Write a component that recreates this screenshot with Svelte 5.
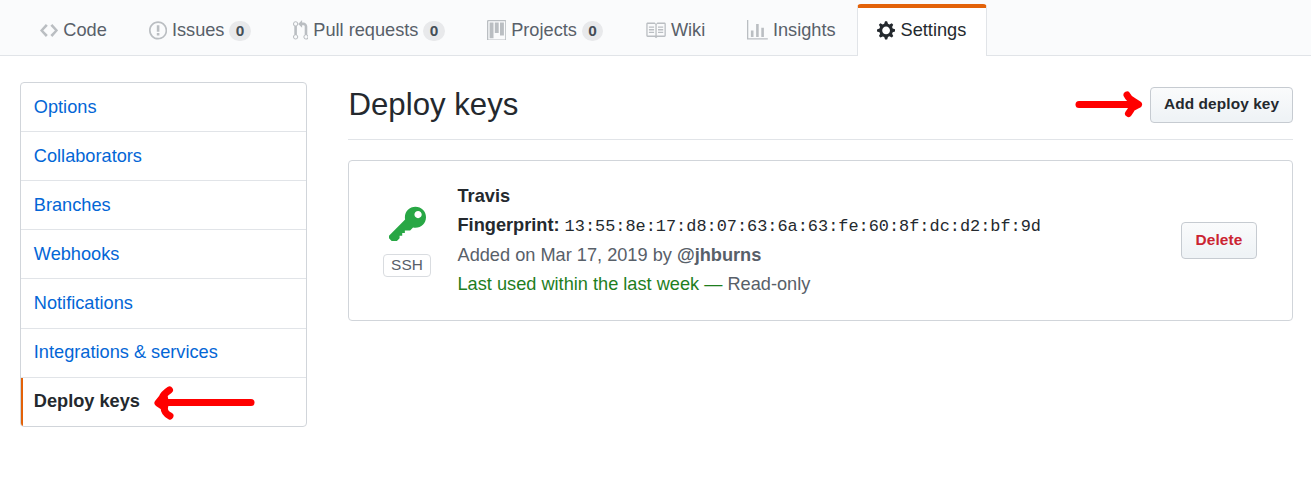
<script>
  const tabs = [
    { label: 'Code', w: 14, d: 'M9.5 3L8 4.5 11.5 8 8 11.5 9.5 13 14 8 9.5 3zm-5 0L0 8l4.5 5L6 11.5 2.5 8 6 4.5 4.5 3z' },
    { label: 'Issues', w: 14, count: 0, d: 'M7 2.3c3.14 0 5.7 2.56 5.7 5.7s-2.56 5.7-5.7 5.7A5.71 5.71 0 0 1 1.3 8c0-3.14 2.56-5.7 5.7-5.7zM7 1C3.14 1 0 4.14 0 8s3.14 7 7 7 7-3.14 7-7-3.14-7-7-7zm1 3H6v5h2V4zm0 6H6v2h2v-2z' },
    { label: 'Pull requests', w: 12, count: 0, d: 'M11 11.28V5c-.03-.78-.34-1.47-.94-2.06C9.46 2.35 8.78 2.03 8 2H7V0L4 3l3 3V4h1c.27.02.48.11.69.31.21.2.3.42.31.69v6.28A1.993 1.993 0 0 0 10 15a1.993 1.993 0 0 0 1-3.72zm-1 2.92c-.66 0-1.2-.55-1.2-1.2 0-.65.55-1.2 1.2-1.2.65 0 1.2.55 1.2 1.2 0 .65-.55 1.2-1.2 1.2zM4 3c0-1.11-.89-2-2-2a1.993 1.993 0 0 0-1 3.72v6.56A1.993 1.993 0 0 0 2 15a1.993 1.993 0 0 0 1-3.72V4.72c.59-.34 1-.98 1-1.72zm-.8 10c0 .66-.55 1.2-1.2 1.2-.65 0-1.2-.55-1.2-1.2 0-.65.55-1.2 1.2-1.2.65 0 1.2.55 1.2 1.2zM2 4.2C1.34 4.2.8 3.65.8 3c0-.65.55-1.2 1.2-1.2.65 0 1.2.55 1.2 1.2 0 .65-.55 1.2-1.2 1.2z' },
    { label: 'Projects', w: 15, count: 0, d: 'M10 12h3V2h-3v10zm-4-2h3V2H6v8zm-4 4h3V2H2v12zm-1 1h13V1H1v14zM14 0H1a1 1 0 0 0-1 1v14a1 1 0 0 0 1 1h13a1 1 0 0 0 1-1V1a1 1 0 0 0-1-1z' },
    { label: 'Wiki', w: 16, d: 'M3 5h4v1H3V5zm0 3h4V7H3v1zm0 2h4V9H3v1zm11-5h-4v1h4V5zm0 2h-4v1h4V7zm0 2h-4v1h4V9zm2-6v9c0 .55-.45 1-1 1H9.5l-1 1-1-1H2c-.55 0-1-.45-1-1V3c0-.55.45-1 1-1h5.5l1 1 1-1H15c.55 0 1 .45 1 1zm-8 .5L7.5 3H2v9h6V3.5zm7-.5H9.5l-.5.5V12h6V3z' },
    { label: 'Insights', w: 16, d: 'M16 14v1H0V0h1v14h15zM5 13H3V8h2v5zm4 0H7V3h2v10zm4 0h-2V6h2v7z' },
    { label: 'Settings', w: 14, active: true, d: 'M14 8.77v-1.6l-1.94-.64-.45-1.09.88-1.84-1.13-1.13-1.81.91-1.09-.45-.69-1.92h-1.6l-.63 1.94-1.11.45-1.84-.88-1.13 1.13.91 1.81-.45 1.09L0 7.23v1.59l1.94.64.45 1.09-.88 1.84 1.13 1.13 1.81-.91 1.09.45.69 1.92h1.59l.63-1.94 1.11-.45 1.84.88 1.13-1.13-.92-1.81.47-1.09L14 8.75v.02zM7 11c-1.66 0-3-1.34-3-3s1.34-3 3-3 3 1.34 3 3-1.34 3-3 3z' }
  ];
  const menu = ['Options', 'Collaborators', 'Branches', 'Webhooks', 'Notifications', 'Integrations & services', 'Deploy keys'];
  const current = 'Deploy keys';
</script>

<header>
  <nav>
    {#each tabs as tab}
      <a class="tab" class:active={tab.active}>
        <svg class="icon" viewBox="0 0 {tab.w} 16" width={tab.w * 1.3} height="20.8"><path fill-rule="evenodd" d={tab.d} /></svg>
        <span>{tab.label}</span>
        {#if tab.count !== undefined}<span class="counter">{tab.count}</span>{/if}
      </a>
    {/each}
  </nav>
</header>

<div class="page">
  <aside>
    {#each menu as item}
      <a class="item" class:selected={item === current}>
        {item}
        {#if item === current}
          <svg class="arrow-left" width="104" height="36" viewBox="0 0 104 36"><path d="M7 17.500H99" /><path d="M17.500 5Q11.500 9 10 13L6 18L12 22Q12 28 18 31" /><path class="barb" d="M6 18L14 8L16 18L14 27Z" /></svg>
        {/if}
      </a>
    {/each}
  </aside>

  <main>
    <div class="subhead">
      <h2>Deploy keys</h2>
      <button class="add">
        Add deploy key
        <svg class="arrow-right" width="70" height="28" viewBox="0 0 70 28"><path d="M4 14.500H62" /><path d="M52 5Q54 9 58 11L63.500 14.500L57 18Q56 20 53.500 23.500" /><path class="barb" d="M64 14.500L56 9L53 14L55 21Z" /></svg>
      </button>
    </div>
    <section class="key">
      <div class="kind">
        <svg width="37" height="42.300" viewBox="0 0 14 16"><path fill-rule="evenodd" d="M12.830 2.170C12.080 1.420 11.140 1.030 10 1c-1.130.03-2.080.42-2.830 1.170S6.040 3.860 6.010 5c0 .3.03.59.09.89L0 12v1l1 1h2l1-1v-1h1v-1h1v-1h2l1.090-1.110c.3.08.59.11.91.11 1.140-.03 2.080-.42 2.830-1.170S13.970 6.140 14 5c-.03-1.140-.42-2.080-1.170-2.830zM11 5.380c-.77 0-1.380-.61-1.380-1.380 0-.77.61-1.380 1.380-1.380.77 0 1.380.61 1.380 1.380 0 .77-.61 1.380-1.380 1.380z" /></svg>
        <span class="ssh">SSH</span>
      </div>
      <div class="details">
        <strong>Travis</strong>
        <div><strong>Fingerprint:</strong> <code>13:55:8e:17:d8:07:63:6a:63:fe:60:8f:dc:d2:bf:9d</code></div>
        <div class="muted">Added on Mar 17, 2019 by <b>@jhburns</b></div>
        <div class="muted"><span class="recent">Last used within the last week —</span> Read-only</div>
      </div>
      <button class="delete">Delete</button>
    </section>
  </main>
</div>

<style>
  :global(body) {
    margin: 0;
    background: #fff;
    color: #24292e;
    font: 18.2px/27.3px "Liberation Sans", Arial, sans-serif;
  }
  header {
    box-sizing: border-box;
    height: 56px;
    padding: 4px 0 0 19.5px;
    background: #fafbfc;
    border-bottom: 1px solid #e1e4e8;
  }
  nav { display: flex; gap: .75px; }
  .tab {
    box-sizing: border-box;
    display: flex;
    align-items: center;
    height: 52px;
    padding: 0 19.5px 2px;
    border: 1px solid transparent;
    border-top: 4px solid transparent;
    border-bottom: 0;
    border-radius: 4px 4px 0 0;
    color: #586069;
    white-space: nowrap;
  }
  .tab.active {
    padding-left: 19px;
    background: #fff;
    color: #24292e;
    border-color: #e36209 #e1e4e8 transparent;
  }
  .icon { margin: -2.2px 5.15px 0 0; fill: #babec2; flex: none; }
  .active .icon { fill: #24292e; margin-right: 5.5px; }
  .counter {
    margin: 0 0 0 5px;
    padding: 0 6.4px;
    border-radius: 20px;
    background: rgba(27, 31, 35, .08);
    color: #444d56;
    font-size: 15.4px;
    font-weight: 700;
    line-height: 20px;
  }
  .page {
    display: flex;
    align-items: flex-start;
    gap: 41px;
    padding: 26px 18px 0 20px;
  }
  aside {
    box-sizing: border-box;
    width: 287px;
    flex: none;
    border: 1px solid #d1d5da;
    border-radius: 4px;
    overflow: hidden;
  }
  .item {
    position: relative;
    display: block;
    box-sizing: border-box;
    height: 49.1px;
    padding: 10.9px 13px 10px 12.8px;
    border-bottom: 1px solid #e1e4e8;
    color: #0366d6;
  }
  .item:nth-child(5) { height: 49.3px; }
  .item:nth-child(6) { padding-top: 10.3px; }
  .item:last-child { border-bottom: 0; height: 48.2px; padding-top: 10.6px; }
  .selected { color: #24292e; font-weight: 700; box-shadow: inset 2px 0 #e36209; }
  .arrow-left, .arrow-right {
    position: absolute;
    fill: none;
    stroke: #f00;
    stroke-width: 7px;
    stroke-linecap: round;
    stroke-linejoin: round;
  }
  .barb { fill: #f00; stroke-width: 2px; }
  .arrow-left { left: 131px; top: 7px; }
  .arrow-right { right: 147px; top: 2px; }
  main { flex: 1; min-width: 0; }
  .subhead {
    display: flex;
    align-items: flex-start;
    justify-content: space-between;
    box-sizing: border-box;
    height: 58px;
    border-bottom: 1px solid #e1e4e8;
  }
  h2 { margin: 0; padding-left: .5px; font-size: 31.2px; font-weight: 400; line-height: 46px; }
  button {
    position: relative;
    box-sizing: border-box;
    height: 37px;
    padding: 0 13px 3px;
    border: 1px solid #c6cbd1;
    border-radius: 4px;
    background: linear-gradient(#fafbfc, #eff3f6 90%);
    color: #24292e;
    font: 700 15.4px/23px "Liberation Sans", Arial, sans-serif;
    letter-spacing: .1px;
    white-space: nowrap;
  }
  .add { margin-top: 5px; height: 36px; width: 143px; }
  .delete { width: 76px; color: #cb2431; }
  .key {
    display: flex;
    align-items: center;
    box-sizing: border-box;
    height: 161px;
    margin-top: 20px;
    padding: 0 35px 0 34px;
    border: 1px solid #d1d5da;
    border-radius: 4px;
  }
  .kind {
    display: flex;
    flex-direction: column;
    align-items: center;
    width: 48px;
    fill: #28a745;
  }
  .ssh {
    box-sizing: border-box;
    width: 48px;
    height: 23px;
    margin-top: 8px;
    border: 1px solid #d9dce0;
    border-radius: 4px;
    color: #586069;
    font-size: 15.4px;
    letter-spacing: .1px;
    line-height: 19px;
    text-align: center;
  }
  .details { flex: 1; margin-left: 26.5px; line-height: 29.25px; }
  .details > * { display: block; }
  code { font: 16.9px "Liberation Mono", monospace; }
  .muted { color: #586069; }
  .recent { color: #1e7e1e; }
</style>
